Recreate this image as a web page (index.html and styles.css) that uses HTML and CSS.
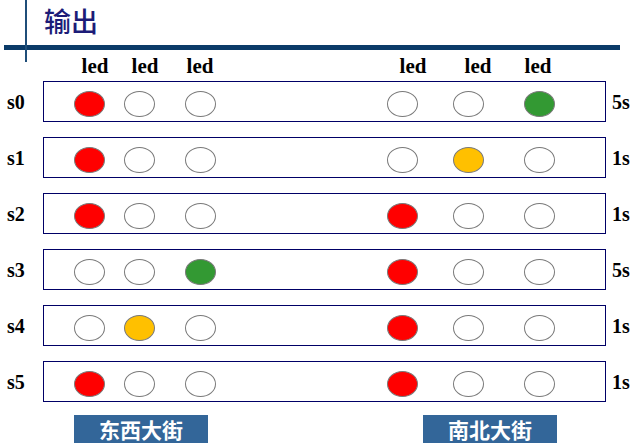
FILE: index.html
```html
<!DOCTYPE html>
<html lang="zh">
<head>
<meta charset="utf-8">
<title>输出</title>
<link rel="stylesheet" href="styles.css">
</head>
<body>
<div class="page">
  <header class="header">
    <h1 class="title">输出</h1>
  </header>
  <div class="rule"></div>

  <div class="led-row">
    <span class="led">led</span>
    <span class="led">led</span>
    <span class="led">led</span>
    <span class="led">led</span>
    <span class="led">led</span>
    <span class="led">led</span>
  </div>

  <div class="rows">
    <div class="row">
      <span class="state">s0</span>
      <div class="box">
        <span class="lamp red"></span><span class="lamp"></span><span class="lamp"></span>
        <span class="lamp"></span><span class="lamp"></span><span class="lamp green"></span>
      </div>
      <span class="time">5s</span>
    </div>
    <div class="row">
      <span class="state">s1</span>
      <div class="box">
        <span class="lamp red"></span><span class="lamp"></span><span class="lamp"></span>
        <span class="lamp"></span><span class="lamp yellow"></span><span class="lamp"></span>
      </div>
      <span class="time">1s</span>
    </div>
    <div class="row">
      <span class="state">s2</span>
      <div class="box">
        <span class="lamp red"></span><span class="lamp"></span><span class="lamp"></span>
        <span class="lamp red"></span><span class="lamp"></span><span class="lamp"></span>
      </div>
      <span class="time">1s</span>
    </div>
    <div class="row">
      <span class="state">s3</span>
      <div class="box">
        <span class="lamp"></span><span class="lamp"></span><span class="lamp green"></span>
        <span class="lamp red"></span><span class="lamp"></span><span class="lamp"></span>
      </div>
      <span class="time">5s</span>
    </div>
    <div class="row">
      <span class="state">s4</span>
      <div class="box">
        <span class="lamp"></span><span class="lamp yellow"></span><span class="lamp"></span>
        <span class="lamp red"></span><span class="lamp"></span><span class="lamp"></span>
      </div>
      <span class="time">1s</span>
    </div>
    <div class="row">
      <span class="state">s5</span>
      <div class="box">
        <span class="lamp red"></span><span class="lamp"></span><span class="lamp"></span>
        <span class="lamp red"></span><span class="lamp"></span><span class="lamp"></span>
      </div>
      <span class="time">1s</span>
    </div>
  </div>

  <div class="streets">
    <span class="street">东西大街</span>
    <span class="street">南北大街</span>
  </div>
</div>
</body>
</html>
```

FILE: styles.css
```css
html, body {
  margin: 0;
  padding: 0;
  background: #ffffff;
}

.page {
  width: 634px;
  height: 443px;
  overflow: hidden;
  font-family: "Liberation Serif", "Times New Roman", serif;
  color: #000;
}

.header {
  position: relative;
  height: 45px;
}

.header::before {
  content: "";
  position: absolute;
  left: 25px;
  top: 0;
  width: 2px;
  height: 62px;
  background: #1f4e79;
  z-index: 2;
}

.title {
  margin: 0;
  padding: 5px 0 0 44px;
  font-family: "Noto Sans CJK SC", "Noto Sans", sans-serif;
  font-weight: 500;
  font-size: 27px;
  line-height: 32px;
  color: #1c1c78;
}

.rule {
  height: 5px;
  margin: 0 14px 0 4px;
  background: #0b3b68;
}

.led-row {
  display: flex;
  height: 31px;
  align-items: center;
  padding-left: 75px;
}

.led {
  width: 40px;
  text-align: center;
  font-weight: 700;
  font-size: 21px;
  line-height: 24px;
  margin-top: 1px;
}

.led:nth-child(2) { margin-left: 10px; }
.led:nth-child(3) { margin-left: 15px; }
.led:nth-child(4) { margin-left: 173px; }
.led:nth-child(5) { margin-left: 25px; }
.led:nth-child(6) { margin-left: 20px; }

.rows {
  display: flex;
  flex-direction: column;
  gap: 15px;
}

.row {
  display: flex;
  align-items: center;
  height: 41px;
}

.state {
  width: 36px;
  padding-left: 7px;
  font-weight: 700;
  font-size: 20px;
  line-height: 24px;
}

.time {
  margin-left: 6px;
  font-weight: 700;
  font-size: 20px;
  line-height: 24px;
}

.box {
  box-sizing: border-box;
  width: 563px;
  height: 41px;
  border: 1.5px solid #000066;
  display: flex;
  align-items: flex-start;
  padding-top: 8.5px;
}

.lamp {
  box-sizing: border-box;
  width: 31px;
  height: 26px;
  border: 1px solid #7a7a7a;
  border-radius: 50%;
  background: #ffffff;
  flex: none;
}

.lamp:nth-child(1) { margin-left: 29.5px; }
.lamp:nth-child(2) { margin-left: 19px; }
.lamp:nth-child(3) { margin-left: 30px; }
.lamp:nth-child(4) { margin-left: 171px; }
.lamp:nth-child(5) { margin-left: 35px; }
.lamp:nth-child(6) { margin-left: 40px; }

.lamp.red { background: #ff0000; }
.lamp.yellow { background: #ffc000; }
.lamp.green { background: #339933; }

.streets {
  display: flex;
  padding-left: 74px;
  margin-top: 13px;
  gap: 215px;
}

.street {
  width: 134px;
  height: 30px;
  background: #336699;
  color: #ffffff;
  font-family: "Noto Sans CJK SC", "Noto Sans", sans-serif;
  font-weight: 700;
  font-size: 21px;
  line-height: 29px;
  text-align: center;
}
```
